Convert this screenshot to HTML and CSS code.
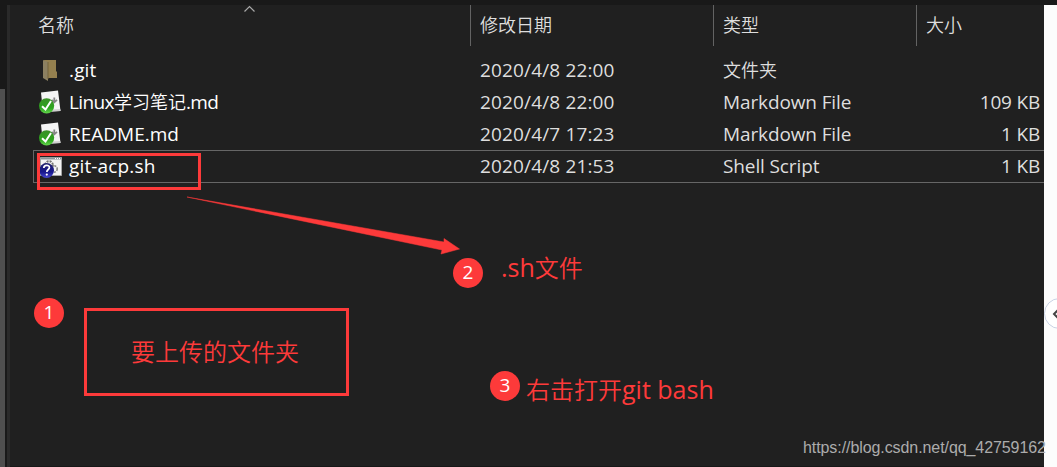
FILE: index.html
```
<!DOCTYPE html>
<html lang="zh-CN">
<head>
    <meta charset="UTF-8">
    <meta name="viewport" content="width=device-width, initial-scale=1.0">
    <title>文件夹</title>
    <link rel="stylesheet" href="styles.css">
</head>
<body>
    <div class="window">
        <!-- Navigation scrollbar -->
        <div class="scrollbar"><div class="thumb"></div></div>
        <div class="splitter"></div>

        <!-- File list -->
        <div class="files">
            <div class="row header">
                <div class="cell name">名称
                    <svg class="sort" width="13" height="8" viewBox="0 0 13 8"><path d="M1.5 6.5L6.5 1.5L11.5 6.5" fill="none" stroke="#a8a8a8" stroke-width="1.2"/></svg>
                </div>
                <div class="cell date">修改日期</div>
                <div class="cell type">类型</div>
                <div class="cell size">大小</div>
            </div>
            <div class="list">
                <div class="row">
                    <div class="cell name">
                        <svg class="icon" width="24" height="24" viewBox="0 0 24 24">
                            <path d="M5 2H17V13L18 14V20H8Z" fill="#94804f"/>
                            <path d="M4 2L9 4V23L4 20Z" fill="#8c8061"/>
                            <path d="M9 4V21" stroke="#73633d" stroke-width="1"/>
                        </svg>
                        <span class="latin">.git</span>
                    </div>
                    <div class="cell date latin">2020/4/8 22:00</div>
                    <div class="cell type">文件夹</div>
                    <div class="cell size latin"></div>
                </div>
                <div class="row">
                    <div class="cell name">
                        <svg class="icon" width="24" height="24" viewBox="0 0 24 24">
                            <path d="M2 2.5L19 0.5L21.5 21L4 22Z" fill="#f4f4f4"/>
                            <path d="M21.5 21L4 22L4 20L21.2 19Z" fill="#d0d0d0"/>
                            <path d="M15.3 7.5V12.5M12.5 9.8L15.3 12.3L18 9.8" fill="none" stroke="#858585" stroke-width="1.8"/>
                            <circle cx="7.6" cy="15.8" r="7.6" fill="url(#green)"/>
                            <path d="M3 16.2L6.5 19.5L12 11" fill="none" stroke="#fff" stroke-width="2"/>
                            <defs><linearGradient id="green" x2="0" y2="1"><stop offset="0" stop-color="#3a8f27"/><stop offset=".65" stop-color="#2ca51d"/><stop offset="1" stop-color="#64d64d"/></linearGradient></defs>
                        </svg>
                        <span><span class="latin">Linux</span>学习笔记<span class="latin">.md</span></span>
                    </div>
                    <div class="cell date latin">2020/4/8 22:00</div>
                    <div class="cell type latin">Markdown File</div>
                    <div class="cell size latin">109 KB</div>
                </div>
                <div class="row">
                    <div class="cell name">
                        <svg class="icon" width="24" height="24" viewBox="0 0 24 24">
                            <path d="M2 2.5L19 0.5L21.5 21L4 22Z" fill="#f4f4f4"/>
                            <path d="M21.5 21L4 22L4 20L21.2 19Z" fill="#d0d0d0"/>
                            <path d="M15.3 7.5V12.5M12.5 9.8L15.3 12.3L18 9.8" fill="none" stroke="#858585" stroke-width="1.8"/>
                            <circle cx="7.6" cy="15.8" r="7.6" fill="url(#green)"/>
                            <path d="M3 16.2L6.5 19.5L12 11" fill="none" stroke="#fff" stroke-width="2"/>
                        </svg>
                        <span class="latin readme">README.md</span>
                    </div>
                    <div class="cell date latin">2020/4/7 17:23</div>
                    <div class="cell type latin">Markdown File</div>
                    <div class="cell size latin">1 KB</div>
                </div>
                <div class="row focused">
                    <div class="cell name">
                        <svg class="icon" width="24" height="24" viewBox="0 0 24 24">
                            <path d="M1.5 2.5H22.5V20.5H1.5Z" fill="#f3f3f3" stroke="#a5a5a5"/>
                            <path d="M2 3.5H22" stroke="#8f9599" stroke-width="2"/>
                            <path d="M16 3.5H21" stroke="#fff" stroke-dasharray="1 1"/>
                            <circle cx="10" cy="10" r="3.8" fill="none" stroke="#737373" stroke-width="2" stroke-dasharray="2 1"/>
                            <circle cx="15" cy="14" r="3.2" fill="none" stroke="#858585" stroke-width="1.6" stroke-dasharray="2 1"/>
                            <circle cx="7.6" cy="15.5" r="7.4" fill="url(#blue)"/>
                            <path d="M4.8 13C4.8 9.4 10.6 9.6 10.4 12.6C10.3 14.5 7.8 14.6 7.8 17" fill="none" stroke="#fff" stroke-width="1.7"/>
                            <circle cx="7.8" cy="19.6" r="1.1" fill="#fff"/>
                            <defs><linearGradient id="blue" x2="0" y2="1"><stop offset="0" stop-color="#20206d"/><stop offset=".6" stop-color="#17178c"/><stop offset="1" stop-color="#4747cf"/></linearGradient></defs>
                        </svg>
                        <span class="latin">git-acp.sh</span>
                    </div>
                    <div class="cell date latin">2020/4/8 21:53</div>
                    <div class="cell type latin">Shell Script</div>
                    <div class="cell size latin">1 KB</div>
                </div>
            </div>
        </div>

        <!-- Page behind the window -->
        <div class="side"></div>
    </div>

    <!-- Annotations -->
    <div class="mark mark-file"></div>
    <svg class="mark arrow" width="276" height="62" viewBox="0 0 276 62"><path d="M2 2L259 47V43.5L274.5 54L256 59L257 55Z" fill="#fd3a3a" stroke="#fd3a3a" stroke-width="0.5"/></svg>
    <div class="badge badge-1">1</div>
    <div class="badge badge-2">2</div>
    <div class="badge badge-3">3</div>
    <div class="mark mark-folder">要上传的文件夹</div>
    <div class="note note-sh"><span class="latin">.sh</span>文件</div>
    <div class="note note-bash">右击打开<span class="latin">git bash</span></div>
    <div class="watermark">https://blog.csdn.net/qq_42759162</div>
    <div class="toggle">
        <svg width="10" height="14" viewBox="0 0 10 14"><path d="M8 2L3 7L8 12" fill="none" stroke="#444" stroke-width="2"/></svg>
    </div>
</body>
</html>
```
FILE: styles.css
```
* {
    margin: 0;
    padding: 0;
    box-sizing: border-box;
}

body {
    position: relative;
    width: 1057px;
    height: 467px;
    overflow: hidden;
    background-color: #202020;
    font-family: 'Open Sans', 'Noto Sans CJK SC', sans-serif;
    font-size: 18px;
    font-weight: 350;
    color: #dedede;
}

.window {
    display: flex;
    height: 467px;
    border-top: 5px solid #191919;
}

/* Left edge */
.scrollbar {
    width: 5px;
    padding-top: 84px;
    background-color: #191919;
}

.thumb {
    height: 378px;
    background-color: #4f4f4f;
}

.splitter {
    width: 5px;
    border-left: 2px solid #191919;
    background-color: #2a2a2a;
}

/* File list */
.files {
    flex: 1;
    padding-left: 23px;
    border-bottom: 1px solid #171717;
}

.row {
    display: grid;
    grid-template-columns: 437px 243px 203px 1fr;
    height: 32px;
    line-height: 32px;
    white-space: nowrap;
}

.cell {
    padding-left: 10px;
}

.latin {
    font-size: 19px;
    font-weight: 400;
    letter-spacing: 0.15px;
}

.header {
    height: 40px;
    line-height: 41px;
}

.header .cell {
    margin-right: -1px;
    border-right: 1px solid #636363;
}

.header .name {
    position: relative;
    padding-left: 5px;
}

.header .cell.size {
    margin-right: 0;
    border-right: none;
}

.sort {
    position: absolute;
    top: 0;
    left: 210px;
}

.list {
    padding-top: 9px;
}

.list .name {
    display: flex;
    align-items: center;
    gap: 6px;
    padding-left: 6px;
    color: #fff;
}

.name > span > .latin {
    letter-spacing: -0.6px;
}

.list .type.latin {
    letter-spacing: -0.12px;
}

.list .name .readme {
    letter-spacing: 0;
}

.icon {
    flex: none;
}

.list .size {
    padding-right: 4px;
    text-align: right;
    letter-spacing: -0.2px;
}

.focused {
    height: 33px;
    line-height: 33px;
    box-shadow: inset 1px 1px #666, inset 0 -1px #666;
}

.side {
    width: 13px;
    background-color: #fcfcfc;
}

/* Annotations */
.mark,
.badge,
.note,
.watermark,
.toggle {
    position: absolute;
}

.mark-file {
    top: 153px;
    left: 37px;
    width: 164px;
    height: 37px;
    border: 3px solid #fd3a3a;
}

.arrow {
    top: 195px;
    left: 185px;
}

.mark-folder {
    top: 308px;
    left: 84px;
    width: 265px;
    height: 88px;
    padding-left: 44px;
    border: 3px solid #fd3a3a;
    font-size: 24px;
    line-height: 81px;
    color: #fd3a3a;
}

.badge {
    width: 30px;
    height: 30px;
    border-radius: 50%;
    background-color: #fd3a3a;
    font-size: 19px;
    font-weight: 400;
    line-height: 29px;
    text-align: center;
    color: #fff;
}

.badge-1 {
    top: 298px;
    left: 34px;
}

.badge-2 {
    top: 258px;
    left: 453px;
}

.badge-3 {
    top: 371px;
    left: 490px;
}

.note {
    font-size: 24px;
    line-height: 36px;
    white-space: nowrap;
    color: #fd3a3a;
}

.note .latin {
    font-size: 25px;
    letter-spacing: 0;
}

.note-sh {
    top: 249px;
    left: 501px;
}

.note-bash {
    top: 371px;
    left: 526px;
}

.watermark {
    top: 438px;
    left: 803px;
    font-family: 'Liberation Sans', Arial, sans-serif;
    font-size: 16px;
    font-weight: 400;
    letter-spacing: -0.08px;
    line-height: 20px;
    white-space: nowrap;
    color: #acacac;
}

.toggle {
    top: 298px;
    left: 1044px;
    display: flex;
    align-items: center;
    width: 31px;
    height: 31px;
    padding-left: 6px;
    border: 1px solid #c9d2e4;
    border-radius: 50%;
    background-color: #fff;
}
```
